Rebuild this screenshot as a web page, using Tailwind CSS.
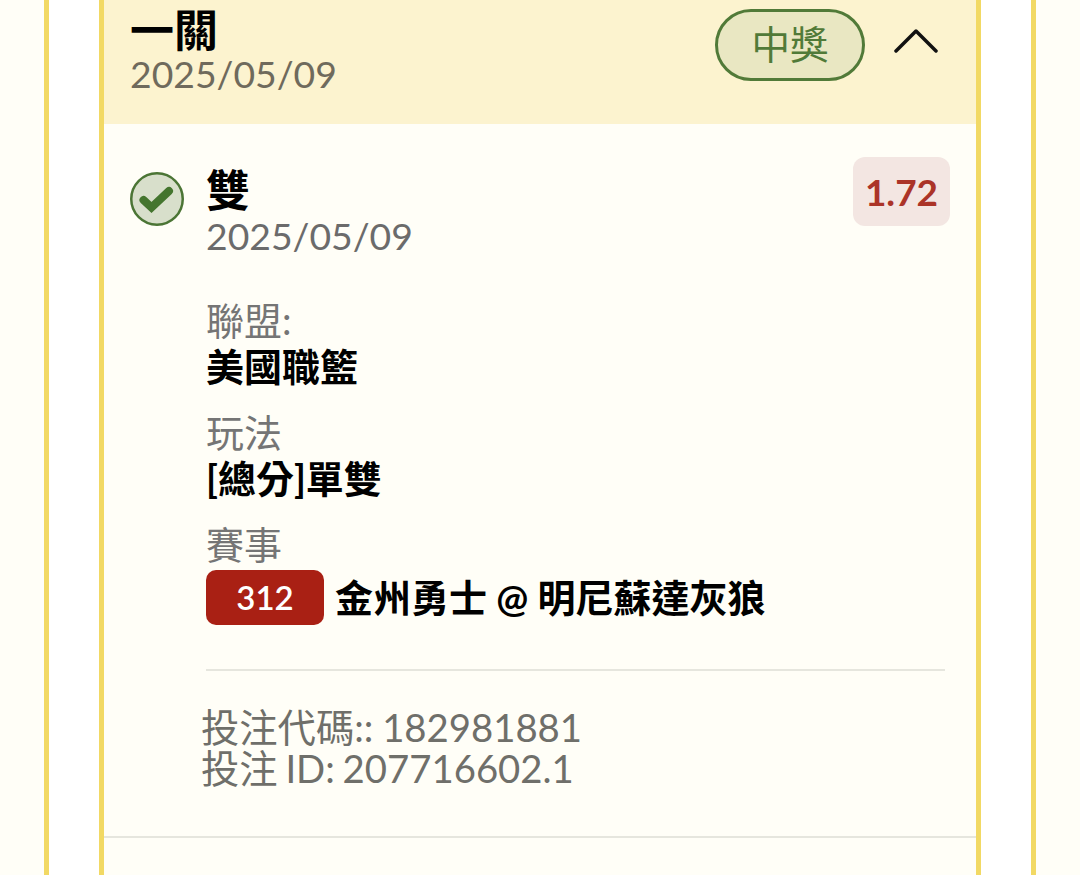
<!DOCTYPE html>
<html lang="zh-Hant">
<head>
<meta charset="utf-8">
<script src="https://cdn.jsdelivr.net/npm/@tailwindcss/browser@4"></script>
</head>
<body class="bg-[#fffef7] overflow-hidden font-['Lato','Noto_Sans_CJK_TC',sans-serif]">
<div class="ml-[44px] w-[992px] h-[875px] overflow-hidden border-x-[5px] border-[#f2d964] bg-white px-[50px]">
  <div class="h-full border-x-[5px] border-[#f2d964] bg-[#fffef7]">
    <header class="h-[124px] bg-[#fcf3cf] pl-[26px] pr-[38px] flex justify-between">
      <div class="pt-[7px]">
        <div class="text-[44px] leading-[46px] font-bold text-black">一關</div>
        <div class="text-[37.3px] leading-[42px] text-[#6f6a5c]">2025/05/09</div>
      </div>
      <div class="flex items-start gap-[29px] pt-[9px]">
        <span class="w-[150px] h-[72px] rounded-full border-[3px] border-[#517a38] bg-[#e9e7c2] text-[#517a38] text-[38.5px] flex items-center justify-center">中獎</span>
        <svg class="mt-[19px]" width="44" height="26" viewBox="0 0 44 26" fill="none" stroke="#111" stroke-width="3.5" stroke-linecap="round" stroke-linejoin="round"><path d="M2 23 L22 3 L42 23"/></svg>
      </div>
    </header>
    <section class="pl-[26px] pr-[26px] pt-[33px] flex">
      <svg class="mt-[15px] shrink-0" width="54" height="54" viewBox="0 0 54 54"><circle cx="27" cy="27" r="25.75" fill="#d8dfcb" stroke="#4b7535" stroke-width="2.5"/><path d="M13.5 28 L21.5 35.5 L39 19" fill="none" stroke="#44752e" stroke-width="8" stroke-linecap="round"/></svg>
      <div class="ml-[22px] flex-1 min-w-0">
        <div class="flex justify-between">
          <div class="pt-[10px]">
            <div class="text-[44px] leading-[46px] font-bold text-black">雙</div>
            <div class="text-[37.3px] leading-[46px] text-[#6b6b6b]">2025/05/09</div>
          </div>
          <span class="w-[97px] h-[69px] rounded-[12px] bg-[#f3e6e2] text-[#ab3428] text-[37px] font-bold flex items-center justify-center">1.72</span>
        </div>
        <div class="mt-[38px] text-[38px] leading-[46px] text-[#757575]">聯盟:</div>
        <div class="text-[38px] leading-[47px] font-bold text-black">美國職籃</div>
        <div class="mt-[19px] text-[38px] leading-[46px] text-[#757575]">玩法</div>
        <div class="text-[38px] leading-[47px] font-bold text-black">[總分]單雙</div>
        <div class="mt-[20px] text-[38px] leading-[44px] text-[#757575]">賽事</div>
        <div class="flex items-center mt-[3px]">
          <span class="w-[118px] h-[55px] rounded-[10px] bg-[#a92014] text-white text-[33px] font-semibold flex items-center justify-center">312</span>
          <span class="ml-[11px] text-[38px] font-bold text-black whitespace-nowrap">金州勇士 @ 明尼蘇達灰狼</span>
        </div>
        <div class="mt-[43px] mr-[5px] h-[2px] bg-[#e6e6de]"></div>
        <div class="mt-[36px] -ml-[5px] text-[38.3px] leading-[41px] text-[#6f6f6a]">
          <div class="[word-spacing:-1px]">投注代碼:: 182981881</div>
          <div class="[word-spacing:-2px]">投注 ID: 207716602.1</div>
        </div>
      </div>
    </section>
    <div class="mt-[47px] h-[2px] bg-[#e6e6de]"></div>
  </div>
</div>
</body>
</html>
